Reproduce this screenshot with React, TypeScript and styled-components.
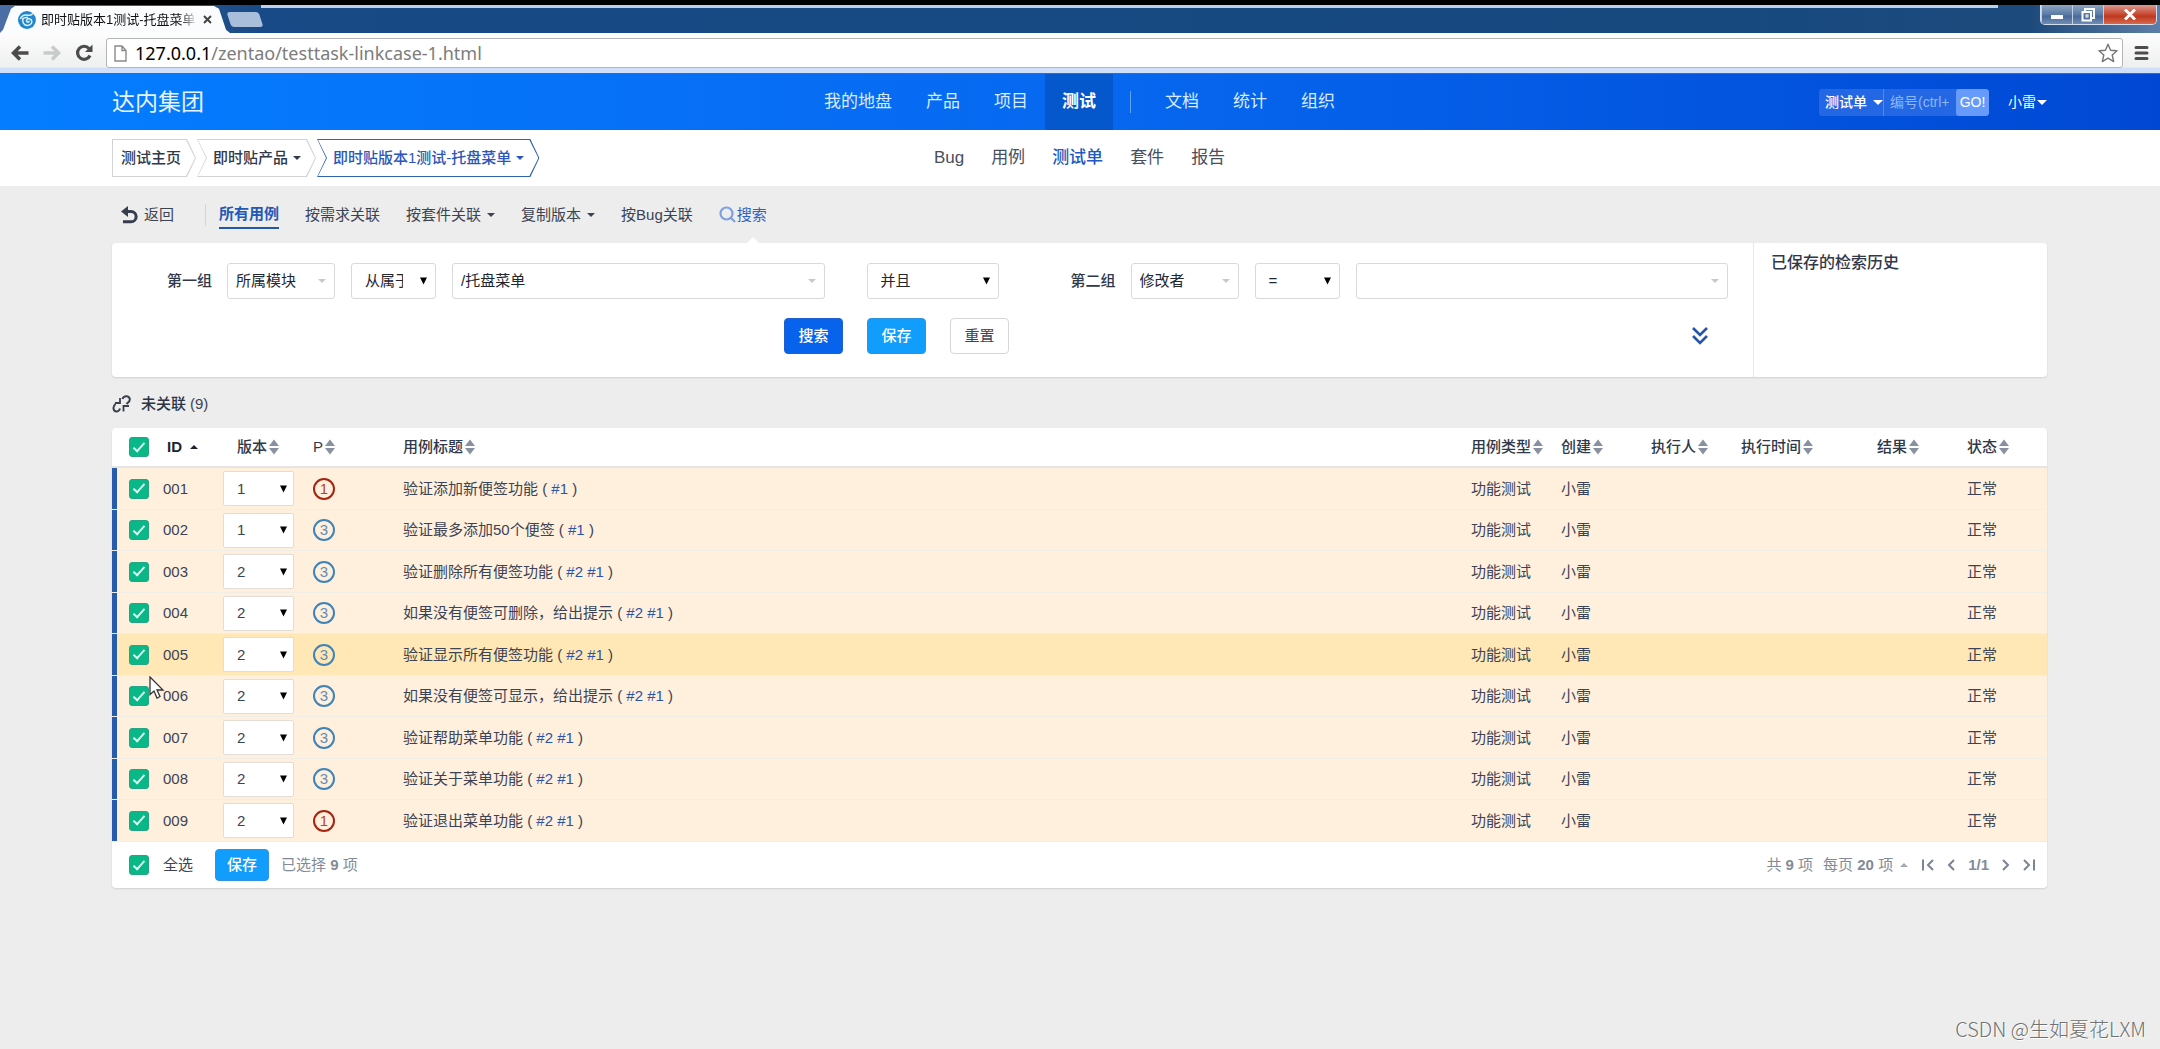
import React from "react";
import styled, { createGlobalStyle, css } from "styled-components";

const GlobalStyle = createGlobalStyle`
  *, *::before, *::after { box-sizing: border-box; }
  body {
    margin: 0;
    background: #ecedec;
    color: #3c4353;
    font: 15px/20px "Liberation Sans", "Noto Sans CJK SC", sans-serif;
  }
  button, input, select { font: inherit; color: inherit; margin: 0; }
  button { cursor: pointer; }
  a { color: inherit; text-decoration: none; }
`;

const Page = styled.div`
  min-height: 100vh;
  display: flex;
  flex-direction: column;
`;

/* ---------- browser frame ---------- */

const TitleBar = styled.div`
  display: flex;
  align-items: flex-end;
  height: 33px;
  border-top: 5px solid #000;
  background: linear-gradient(90deg, #4c6ea6 0, #174a86 260px, #17497f 80%, #1d4a7c 94%, #5d7ea6 100%);
`;

const BrowserTab = styled.div`
  display: flex;
  align-items: center;
  width: 230px;
  height: 27px;
  padding: 0 18px;
  color: #111;
  background: #fbfcfe;
  clip-path: polygon(0 100%, 3px 88%, 11px 10%, 15px 0, 214px 0, 219px 10%, 226px 88%, 230px 100%);
`;

const TabTitle = styled.span`
  width: 157px;
  margin: 0 6px 0 5px;
  font-size: 13px;
  white-space: nowrap;
  mask-image: linear-gradient(90deg, #000 90%, transparent);
`;

const NewTab = styled.button`
  width: 32px;
  height: 15px;
  margin: 0 0 6px -1px;
  padding: 0;
  border: 0;
  border-radius: 3px;
  background: #a9bedb;
  transform: skewX(18deg);
`;

const TopGlow = styled.div`
  flex: 1;
  align-self: flex-start;
  height: 3px;
  margin-right: 42px;
  background: #bcd0ea;
`;

const WindowButtons = styled.div`
  display: flex;
  align-self: flex-start;
  height: 20px;
  margin-right: 3px;
  border: 1px solid #d3dfee;
  border-top: 0;
  border-radius: 0 0 5px 5px;
  overflow: hidden;
`;

const WindowButton = styled.button<{ $close?: boolean }>`
  display: grid;
  place-items: center;
  width: ${(p) => (p.$close ? 53 : 31)}px;
  padding: 0;
  border: 0;
  border-left: 1px solid #c3d0e2;
  background: ${(p) =>
    p.$close
      ? "linear-gradient(#d99a90, #c9462f 50%, #bd3a22 60%, #d9694a)"
      : "linear-gradient(#8fa6c4, #587aa4 50%, #48699a 60%, #6f8db4)"};
`;

const AddressBar = styled.div`
  display: flex;
  align-items: center;
  height: 41px;
  padding: 0 9px 0 10px;
  background: linear-gradient(#fdfdfe, #eeefef 85%, #cfe0f8 88%);
  border-bottom: 1px solid #4a6796;
`;

const ToolButton = styled.button`
  display: grid;
  place-items: center;
  padding: 0;
  border: 0;
  background: none;
  width: 20px;
  margin-right: 12px;
`;

const MenuButton = styled(ToolButton)`
  margin: 0 0 0 8px;
`;

const UrlBox = styled.div`
  flex: 1;
  display: flex;
  align-items: center;
  height: 30px;
  padding: 0 4px 0 7px;
  border: 1px solid #b3b5b7;
  border-radius: 3px;
  background: #fff;
`;

const UrlText = styled.div`
  flex: 1;
  margin-left: 8px;
  color: #7c7c7c;
  font: 18px/24px "Noto Sans", "Open Sans", sans-serif;
  b { color: #000; font-weight: 400; }
`;

/* ---------- application header ---------- */

const Header = styled.header`
  display: grid;
  grid-template-columns: 1fr auto 1fr;
  align-items: center;
  height: 56px;
  padding: 0 113px 0 112px;
  color: #fff;
  background: linear-gradient(90deg, #047dff, #0768f0 50%, #0048d4);
`;

const Company = styled.a`
  color: #e4f4ff;
  font-size: 23px;
  line-height: 32px;
`;

const MainNav = styled.nav`
  display: flex;
  align-items: center;
`;

const MainLink = styled.a<{ $active?: boolean }>`
  padding: 0 17px;
  font-size: 17px;
  line-height: 56px;
  color: ${(p) => (p.$active ? "#fff" : "#d6ecff")};
  font-weight: ${(p) => (p.$active ? 700 : 400)};
  background: ${(p) => (p.$active ? "#0557cc" : "none")};
`;

const NavDivider = styled.span`
  width: 1px;
  height: 22px;
  margin: 0 17px;
  background: #5da4f8;
`;

const HeaderTools = styled.div`
  display: flex;
  justify-content: flex-end;
  align-items: center;
  font-size: 14px;
`;

const QuickSearch = styled.form`
  display: flex;
  height: 27px;
  margin-right: 19px;
  border-radius: 3px;
  overflow: hidden;
  background: #2467e4;
`;

const QuickType = styled.button`
  display: flex;
  align-items: center;
  gap: 6px;
  width: 65px;
  padding: 0 0 0 6px;
  border: 0;
  border-right: 1px solid #5588ec;
  background: none;
  font-weight: 500;
  white-space: nowrap;
`;

const QuickInput = styled.input`
  width: 72px;
  padding: 0 7px 0 6px;
  border: 0;
  background: none;
  &::placeholder { color: #8fb5f7; }
`;

const GoButton = styled.button`
  width: 33px;
  padding: 0;
  border: 0;
  border-radius: 3px;
  background: #669bfb;
`;

const UserButton = styled.button`
  display: flex;
  align-items: center;
  gap: 1px;
  padding: 0;
  border: 0;
  background: none;
`;

const Caret = styled.i<{ $color?: string; $up?: boolean; $small?: boolean }>`
  display: inline-block;
  border: ${(p) => (p.$small ? 4 : 5)}px solid transparent;
  ${(p) => (p.$up ? "border-top-width: 0; border-bottom-color" : "border-bottom-width: 0; border-top-color")}:
    ${(p) => p.$color ?? "currentColor"};
`;

/* ---------- breadcrumb and sub menu ---------- */

const SubHeader = styled.div`
  display: grid;
  grid-template-columns: 1fr auto 1fr;
  align-items: center;
  height: 56px;
  padding: 0 113px 0 112px;
  background: #fefffe;
`;

const Crumbs = styled.nav`
  display: flex;
  gap: 1px;
`;

const crumbFirst = "polygon(0 0, calc(100% - 9px) 0, 100% 50%, calc(100% - 9px) 100%, 0 100%)";
const crumbNext = "polygon(0 0, calc(100% - 9px) 0, 100% 50%, calc(100% - 9px) 100%, 0 100%, 9px 50%)";

const Crumb = styled.a<{ $first?: boolean; $active?: boolean }>`
  position: relative;
  isolation: isolate;
  display: flex;
  align-items: center;
  gap: 5px;
  height: 38px;
  padding: 0 15px 0 ${(p) => (p.$first ? 9 : 16)}px;
  white-space: nowrap;
  font-weight: 500;
  color: ${(p) => (p.$active ? "#2a57b8" : "#30384a")};
  background: ${(p) => (p.$active ? "#3262b2" : "#d0d3d8")};
  clip-path: ${(p) => (p.$first ? crumbFirst : crumbNext)};
  &::before {
    content: "";
    position: absolute;
    inset: 1px;
    z-index: -1;
    background: #fff;
    clip-path: ${(p) => (p.$first ? crumbFirst : crumbNext)};
  }
`;

const SubNav = styled.nav`
  display: flex;
  gap: 27px;
  font-size: 17px;
  line-height: 24px;
`;

const SubLink = styled.a<{ $active?: boolean }>`
  color: ${(p) => (p.$active ? "#2458c0" : "#484f5e")};
  font-weight: ${(p) => (p.$active ? 500 : 400)};
`;

/* ---------- filter bar ---------- */

const Main = styled.main`
  flex: 1;
  display: flex;
  flex-direction: column;
  padding: 0 113px 0 112px;
`;

const FilterBar = styled.div`
  display: flex;
  align-items: center;
  gap: 26px;
  height: 57px;
  padding-left: 9px;
`;

const BackLink = styled.a`
  display: flex;
  align-items: center;
  gap: 6px;
  padding-right: 31px;
  margin-right: -13px;
  line-height: 22px;
  border-right: 1px solid #d3d5d6;
`;

const FilterLink = styled.a<{ $active?: boolean; $search?: boolean }>`
  position: relative;
  display: flex;
  align-items: center;
  gap: ${(p) => (p.$search ? 1 : 6)}px;
  line-height: 28px;
  ${(p) =>
    p.$active &&
    css`
      color: #2358b8;
      font-weight: 700;
      line-height: 26px;
      border-bottom: 2px solid #2358a8;
    `}
  ${(p) =>
    p.$search &&
    css`
      color: #2f62c6;
      &::after {
        content: "";
        position: absolute;
        left: 27px;
        top: 36px;
        border: 7px solid transparent;
        border-top-width: 0;
        border-bottom-color: #fff;
      }
    `}
`;

/* ---------- search panel ---------- */

const SearchPanel = styled.section`
  display: flex;
  min-height: 134px;
  border-radius: 4px;
  background: #fefffe;
  box-shadow: 0 1px 2px rgba(0, 0, 0, 0.12);
`;

const SearchForm = styled.form`
  flex: 1;
  padding: 20px 25px 23px 55px;
`;

const ConditionRow = styled.div`
  display: flex;
`;

const ConditionGroup = styled.div`
  flex: 1;
  display: flex;
  align-items: center;
  gap: 16px;
`;

const GroupLabel = styled.label`
  width: 44px;
  font-weight: 500;
  white-space: nowrap;
  color: #30384a;
`;

const Picker = styled.span<{ $width?: number; $join?: boolean }>`
  display: grid;
  align-items: center;
  justify-items: end;
  ${(p) => (p.$width ? `width: ${p.$width}px;` : "flex: 1;")}
  ${(p) => p.$join && "margin: 0 72px 0 42px;"}
  > * { grid-area: 1 / 1; }
  > i, > svg { pointer-events: none; margin-right: 9px; }
`;

const SelectBox = styled.select<{ $native?: boolean }>`
  appearance: none;
  width: 100%;
  height: 36px;
  padding: 0 32px 0 ${(p) => (p.$native ? 13 : 8)}px;
  border: 1px solid #d7dadd;
  border-radius: 3px;
  background: #fff;
  color: #22262e;
`;

const ActionRow = styled.div`
  display: flex;
  align-items: center;
  margin-top: 19px;
`;

const Actions = styled.div`
  flex: 1;
  display: flex;
  justify-content: center;
  gap: 24px;
`;

const Button = styled.button<{ $tone: "primary" | "info" | "plain"; $compact?: boolean }>`
  width: ${(p) => (p.$compact ? 54 : 59)}px;
  height: ${(p) => (p.$compact ? 32 : 36)}px;
  padding: 0;
  border-radius: 4px;
  font-weight: ${(p) => (p.$tone === "plain" ? 400 : 500)};
  border: 1px solid ${(p) => ({ primary: "#1f5fce", info: "#2f95e2", plain: "#d5d7dc" })[p.$tone]};
  background: ${(p) => ({ primary: "#0763ec", info: "#109dfc", plain: "#fff" })[p.$tone]};
  color: ${(p) => (p.$tone === "plain" ? "#3c4353" : "#fff")};
`;

const ExpandButton = styled.button`
  display: flex;
  justify-content: flex-end;
  width: 102px;
  padding: 0 20px 0 0;
  border: 0;
  background: none;
`;

const SavedSearches = styled.aside`
  width: 294px;
  padding: 10px 17px;
  border-left: 1px solid #e7e8e8;
`;

const SavedTitle = styled.h2`
  margin: 0;
  font-size: 16px;
  line-height: 20px;
  font-weight: 500;
  color: #30384a;
`;

/* ---------- case table ---------- */

const TableHeading = styled.div`
  display: flex;
  align-items: center;
  gap: 4px;
  height: 51px;
  padding-top: 3px;
  svg { margin-right: 6px; }
  b { color: #2c3342; font-weight: 500; }
`;

const TableCard = styled.section`
  border-radius: 4px;
  background: #fefffe;
  box-shadow: 0 1px 2px rgba(0, 0, 0, 0.12);
`;

const CaseTable = styled.table`
  width: 100%;
  table-layout: fixed;
  border-collapse: separate;
  border-spacing: 0;
`;

const Th = styled.th<{ $width?: number; $center?: boolean }>`
  ${(p) => p.$width && `width: ${p.$width}px;`}
  height: 40px;
  padding: 0 0 0 ${(p) => (p.$center ? 0 : 10)}px;
  text-align: ${(p) => (p.$center ? "center" : "left")};
  font-weight: 500;
  color: #30384a;
  white-space: nowrap;
  border-bottom: 2px solid #e6e5e1;
`;

const HeadLabel = styled.span<{ $sorted?: boolean }>`
  display: inline-flex;
  align-items: center;
  gap: ${(p) => (p.$sorted ? 8 : 2)}px;
  ${(p) => p.$sorted && "font-weight: 700;"}
`;

const CheckLine = styled.label`
  display: flex;
  align-items: center;
  gap: 14px;
  padding-left: 17px;
`;

const HeadCheckLine = styled(CheckLine)`
  gap: 18px;
  padding-left: 7px;
  color: #1d2430;
`;

const Checkbox = styled.input`
  appearance: none;
  display: grid;
  place-items: center;
  width: 20px;
  height: 20px;
  border: 1px solid #25a585;
  border-radius: 3px;
  background: #0ab787;
  &::after {
    content: "";
    width: 6px;
    height: 12px;
    margin-top: -3px;
    border: solid #d8fff2;
    border-width: 0 2px 2px 0;
    transform: rotate(42deg);
  }
`;

const Row = styled.tr<{ $hover?: boolean }>`
  height: 42px;
  background: ${(p) => (p.$hover ? "#ffe8b6" : "#fff0de")};
  &:nth-child(even) { height: 41px; }
  > td:first-child { padding: 0; box-shadow: inset 5px 0 #265cab; }
`;

const Td = styled.td`
  padding: 0 0 0 10px;
  border-bottom: 1px solid #f0eee6;
  white-space: nowrap;
`;

const VersionPicker = styled(Picker)`
  width: 71px;
  > svg { margin-right: 7px; }
`;

const VersionSelect = styled.select`
  appearance: none;
  display: block;
  width: 100%;
  height: 35px;
  padding: 0 20px 0 13px;
  border: 1px solid #e2ddd6;
  border-radius: 2px;
  background: #fff;
`;

const Priority = styled.span<{ $high?: boolean }>`
  display: grid;
  place-items: center;
  width: 22px;
  height: 22px;
  border: 2px solid ${(p) => (p.$high ? "#a5230f" : "#3f83b8")};
  border-radius: 50%;
  color: ${(p) => (p.$high ? "#b8432c" : "#5e8cb4")};
  line-height: 18px;
`;

const BugLink = styled.a`
  color: #2c53a8;
`;

const TableFooter = styled.footer`
  display: flex;
  align-items: center;
  height: 46px;
  color: #838a99;
`;

const SelectAll = styled(CheckLine)`
  margin-right: 22px;
  color: #3c4353;
`;

const Selected = styled.span`
  flex: 1;
  margin-left: 12px;
`;

const Pager = styled.nav`
  display: flex;
  align-items: center;
  padding-right: 12px;
`;

const PageSize = styled.button`
  display: flex;
  align-items: center;
  gap: 7px;
  margin: 0 14px 0 10px;
  padding: 0;
  border: 0;
  background: none;
`;

const PageButton = styled.button`
  display: grid;
  padding: 0;
  border: 0;
  background: none;
`;

const PageSteps = styled.div`
  display: flex;
  align-items: center;
  gap: 10px;
`;

const Watermark = styled.div`
  align-self: flex-end;
  margin-top: auto;
  padding: 0 14px 6px 0;
  color: #6f7172;
  font: 300 20px/28px "Noto Sans CJK SC", sans-serif;
  text-shadow: 1px 1px 0 #fff;
`;

const Pointer = styled.svg`
  position: absolute;
  left: 149px;
  top: 676px;
  pointer-events: none;
`;

/* ---------- drawings ---------- */

const Sort = () => (
  <svg width="10" height="16" viewBox="0 0 10 16" fill="#8990a0" aria-hidden="true">
    <path d="M5 0.5 L10 7 H0 Z M5 15.5 L10 9 H0 Z" />
  </svg>
);

const NativeArrow = () => (
  <svg width="7" height="8" viewBox="0 0 7 8" fill="#000" aria-hidden="true">
    <path d="M0 0.5 H7 L3.5 7.5 Z" />
  </svg>
);

const Step = ({ d, label }: { d: string; label: string }) => (
  <PageButton type="button" aria-label={label}>
    <svg width="13" height="14" viewBox="0 0 13 14" fill="none" stroke="#7c8392" strokeWidth="2">
      <path d={d} />
    </svg>
  </PageButton>
);

/* ---------- data ---------- */

type Case = { id: string; version: string; pri: 1 | 3; title: string; bugs: string[]; hover?: boolean };

const cases: Case[] = [
  { id: "001", version: "1", pri: 1, title: "验证添加新便签功能", bugs: ["#1"] },
  { id: "002", version: "1", pri: 3, title: "验证最多添加50个便签", bugs: ["#1"] },
  { id: "003", version: "2", pri: 3, title: "验证删除所有便签功能", bugs: ["#2", "#1"] },
  { id: "004", version: "2", pri: 3, title: "如果没有便签可删除，给出提示", bugs: ["#2", "#1"] },
  { id: "005", version: "2", pri: 3, title: "验证显示所有便签功能", bugs: ["#2", "#1"], hover: true },
  { id: "006", version: "2", pri: 3, title: "如果没有便签可显示，给出提示", bugs: ["#2", "#1"] },
  { id: "007", version: "2", pri: 3, title: "验证帮助菜单功能", bugs: ["#2", "#1"] },
  { id: "008", version: "2", pri: 3, title: "验证关于菜单功能", bugs: ["#2", "#1"] },
  { id: "009", version: "2", pri: 1, title: "验证退出菜单功能", bugs: ["#2", "#1"] },
];

const tailColumns: [string, number][] = [
  ["用例类型", 90],
  ["创建", 90],
  ["执行人", 90],
  ["执行时间", 136],
  ["结果", 90],
  ["状态", 90],
];

const Field = ({ id, value, width, native, join, label }: {
  id?: string; value: string; width?: number; native?: boolean; join?: boolean; label: string;
}) => (
  <Picker $width={width} $join={join}>
    <SelectBox id={id} aria-label={id ? undefined : label} $native={native}>
      <option>{value}</option>
    </SelectBox>
    {native ? <NativeArrow /> : <Caret $small $color="#c6c9ce" />}
  </Picker>
);

const BrowserFrame = () => (
  <>
    <TitleBar>
      <BrowserTab>
        <svg width="18" height="18" viewBox="0 0 18 18" aria-hidden="true">
          <circle cx="9" cy="9" r="9" fill="#2187c8" />
          <path d="M2.500 7.500 C4 4.500 7 3.500 10 4.200 C12 4.600 13.500 4 14.500 3 M5 7.500 C4 11 6 14.500 9.500 14.500 C13 14.500 14.800 11.500 13.500 9 C12.300 7 8.800 7.200 8.500 9.500 C8.300 11.200 10.500 11.800 11.200 10.300 M4.500 8 C6 6.500 8 6.200 9.500 6.500" fill="none" stroke="#d9f2ff" strokeWidth="1.500" strokeLinecap="round" />
        </svg>
        <TabTitle>即时贴版本1测试-托盘菜单</TabTitle>
        <svg width="9" height="9" viewBox="0 0 9 9" stroke="#444" strokeWidth="2" aria-hidden="true">
          <path d="M1 1 L8 8 M8 1 L1 8" />
        </svg>
      </BrowserTab>
      <NewTab type="button" aria-label="New tab" />
      <TopGlow />
      <WindowButtons>
        <WindowButton type="button" aria-label="Minimize">
          <svg width="12" height="12"><rect x="0" y="6" width="12" height="4" fill="#fff" /></svg>
        </WindowButton>
        <WindowButton type="button" aria-label="Restore">
          <svg width="14" height="14" viewBox="0 0 14 14" fill="none" stroke="#fff" strokeWidth="2">
            <path d="M4 3 V1 H13 V10 H11" /><rect x="1.500" y="4" width="8.500" height="8.500" /><rect x="5" y="7" width="2" height="2" strokeWidth="1" />
          </svg>
        </WindowButton>
        <WindowButton type="button" $close aria-label="Close">
          <svg width="12" height="11" viewBox="0 0 12 11" stroke="#fff" strokeWidth="3"><path d="M1 0.500 L11 10.500 M11 0.500 L1 10.500" /></svg>
        </WindowButton>
      </WindowButtons>
    </TitleBar>
    <AddressBar>
      <ToolButton type="button" aria-label="Back">
        <svg width="18" height="16" viewBox="0 0 18 16" fill="none" stroke="#4b4b4b" strokeWidth="3.500"><path d="M17.500 8 H3 M9 1.500 L2.500 8 L9 14.500" /></svg>
      </ToolButton>
      <ToolButton type="button" aria-label="Forward">
        <svg width="18" height="16" viewBox="0 0 18 16" fill="none" stroke="#c9cbcb" strokeWidth="3.500"><path d="M0.500 8 H15 M9 1.500 L15.500 8 L9 14.500" /></svg>
      </ToolButton>
      <ToolButton type="button" aria-label="Reload">
        <svg width="18" height="18" viewBox="0 0 18 18"><path d="M14 4.500 A6.500 6.500 0 1 0 15 11.500" fill="none" stroke="#4b4b4b" strokeWidth="3.200" /><path d="M17.500 0.500 V8 H10 Z" fill="#4b4b4b" /></svg>
      </ToolButton>
      <UrlBox>
        <svg width="13" height="17" viewBox="0 0 13 17" fill="#fff" stroke="#8a8a8a" strokeWidth="1.400"><path d="M1 1 H8 L12 5.500 V16 H1 Z M8 1 V5.500 H12" /></svg>
        <UrlText><b>127.0.0.1</b>/zentao/testtask-linkcase-1.html</UrlText>
        <svg width="20" height="20" viewBox="0 0 20 20" fill="#fff" stroke="#757575" strokeWidth="1.400" strokeLinejoin="round"><path d="M10 1.200 L12.600 7.200 L19 7.700 L14.200 12 L15.700 18.600 L10 15.100 L4.300 18.600 L5.800 12 L1 7.700 L7.400 7.200 Z" /></svg>
      </UrlBox>
      <MenuButton type="button" aria-label="Menu">
        <svg width="15" height="16" viewBox="0 0 15 16" stroke="#4d4d4d" strokeWidth="3" strokeLinecap="round"><path d="M2 2.500 H13 M2 8 H13 M2 13.500 H13" /></svg>
      </MenuButton>
    </AddressBar>
  </>
);

export default function App() {
  return (
    <Page>
      <GlobalStyle />
      <BrowserFrame />
      <Header>
        <Company href="#">达内集团</Company>
        <MainNav>
          <MainLink href="#">我的地盘</MainLink>
          <MainLink href="#">产品</MainLink>
          <MainLink href="#">项目</MainLink>
          <MainLink href="#" $active>测试</MainLink>
          <NavDivider />
          <MainLink href="#">文档</MainLink>
          <MainLink href="#">统计</MainLink>
          <MainLink href="#">组织</MainLink>
        </MainNav>
        <HeaderTools>
          <QuickSearch>
            <QuickType type="button">测试单<Caret /></QuickType>
            <QuickInput placeholder="编号(ctrl+g)" aria-label="编号" />
            <GoButton type="button">GO!</GoButton>
          </QuickSearch>
          <UserButton type="button">小雷<Caret /></UserButton>
        </HeaderTools>
      </Header>
      <SubHeader>
        <Crumbs>
          <Crumb href="#" $first>测试主页</Crumb>
          <Crumb href="#">即时贴产品<Caret $small /></Crumb>
          <Crumb href="#" $active>即时贴版本1测试-托盘菜单<Caret $small /></Crumb>
        </Crumbs>
        <SubNav>
          <SubLink href="#">Bug</SubLink>
          <SubLink href="#">用例</SubLink>
          <SubLink href="#" $active>测试单</SubLink>
          <SubLink href="#">套件</SubLink>
          <SubLink href="#">报告</SubLink>
        </SubNav>
      </SubHeader>
      <Main>
        <FilterBar>
          <BackLink href="#">
            <svg width="17" height="18" viewBox="0 0 17 18" fill="none" stroke="#363d4c" strokeWidth="3">
              <path d="M4 5.500 H10 A5 5 0 0 1 10 15.800 H2" /><path d="M7 0 V11 L0 5.500 Z" fill="#363d4c" stroke="none" />
            </svg>
            返回
          </BackLink>
          <FilterLink href="#" $active>所有用例</FilterLink>
          <FilterLink href="#">按需求关联</FilterLink>
          <FilterLink href="#">按套件关联<Caret $small /></FilterLink>
          <FilterLink href="#">复制版本<Caret $small /></FilterLink>
          <FilterLink href="#">按Bug关联</FilterLink>
          <FilterLink href="#" $search>
            <svg width="17" height="17" viewBox="0 0 17 17" fill="none" stroke="#7f9fdc" strokeWidth="2.200"><circle cx="7.500" cy="7.500" r="6" /><path d="M11.800 11.800 L16 16" /></svg>
            搜索
          </FilterLink>
        </FilterBar>
        <SearchPanel>
          <SearchForm>
            <ConditionRow>
              <ConditionGroup>
                <GroupLabel htmlFor="field1">第一组</GroupLabel>
                <Field id="field1" label="字段" value="所属模块" width={108} />
                <Field label="条件" value="从属于" width={85} native />
                <Field label="值" value="/托盘菜单" />
              </ConditionGroup>
              <Field label="关系" value="并且" width={132} native join />
              <ConditionGroup>
                <GroupLabel htmlFor="field2">第二组</GroupLabel>
                <Field id="field2" label="字段" value="修改者" width={108} />
                <Field label="条件" value="=" width={85} native />
                <Field label="值" value="" />
              </ConditionGroup>
            </ConditionRow>
            <ActionRow>
              <Actions>
                <Button type="button" $tone="primary">搜索</Button>
                <Button type="button" $tone="info">保存</Button>
                <Button type="button" $tone="plain">重置</Button>
              </Actions>
              <ExpandButton type="button" aria-label="展开">
                <svg width="16" height="18" viewBox="0 0 16 18" fill="none" stroke="#2655a6" strokeWidth="2.600"><path d="M1 1 L8 8 L15 1 M1 9 L8 16 L15 9" /></svg>
              </ExpandButton>
            </ActionRow>
          </SearchForm>
          <SavedSearches>
            <SavedTitle>已保存的检索历史</SavedTitle>
          </SavedSearches>
        </SearchPanel>
        <TableHeading>
          <svg width="19" height="18" viewBox="0 0 19 18" fill="none" stroke="#3a404e" strokeWidth="2">
            <path d="M8 3 V8 H3" strokeWidth="1.800" />
            <path d="M3.500 9 C0 12 1.500 17 5 16.500 C6.500 16.300 7.500 15 8 13.500" />
            <path d="M10.500 4 C11.500 0.500 17 0 17.800 4 C18.200 6.500 16 7.500 14.500 9" />
            <path d="M11.500 16.500 V11 H17" strokeWidth="1.800" />
          </svg>
          <b>未关联</b>
          <span>(9)</span>
        </TableHeading>
        <TableCard>
          <CaseTable>
            <thead>
              <tr>
                <Th $width={101}>
                  <HeadCheckLine>
                    <Checkbox type="checkbox" defaultChecked />
                    <HeadLabel $sorted>ID<Caret $small $up /></HeadLabel>
                  </HeadCheckLine>
                </Th>
                <Th $width={90} $center><HeadLabel>版本<Sort /></HeadLabel></Th>
                <Th $width={90}><HeadLabel>P<Sort /></HeadLabel></Th>
                <Th><HeadLabel>用例标题<Sort /></HeadLabel></Th>
                {tailColumns.map(([name, width]) => (
                  <Th key={name} $width={width}><HeadLabel>{name}<Sort /></HeadLabel></Th>
                ))}
              </tr>
            </thead>
            <tbody>
              {cases.map((c) => (
                <Row key={c.id} $hover={c.hover}>
                  <Td><CheckLine><Checkbox type="checkbox" defaultChecked />{c.id}</CheckLine></Td>
                  <Td>
                    <VersionPicker>
                      <VersionSelect defaultValue={c.version} aria-label={`版本 ${c.id}`}>
                        <option>{c.version}</option>
                      </VersionSelect>
                      <NativeArrow />
                    </VersionPicker>
                  </Td>
                  <Td><Priority $high={c.pri === 1}>{c.pri}</Priority></Td>
                  <Td>
                    {c.title} ( {c.bugs.map((b) => <React.Fragment key={b}><BugLink href="#">{b}</BugLink> </React.Fragment>)})
                  </Td>
                  <Td>功能测试</Td>
                  <Td>小雷</Td>
                  <Td />
                  <Td />
                  <Td />
                  <Td>正常</Td>
                </Row>
              ))}
            </tbody>
          </CaseTable>
          <TableFooter>
            <SelectAll><Checkbox type="checkbox" defaultChecked />全选</SelectAll>
            <Button type="button" $tone="info" $compact>保存</Button>
            <Selected>已选择 <b>9</b> 项</Selected>
            <Pager>
              <span>共 <b>9</b> 项</span>
              <PageSize type="button"><span>每页 <b>20</b> 项</span><Caret $small $up $color="#a3a8b3" /></PageSize>
              <PageSteps>
                <Step label="首页" d="M1 1.500 V12.500 M11 2 L6 7 L11 12" />
                <Step label="上一页" d="M9 2 L4 7 L9 12" />
                <b>1/1</b>
                <Step label="下一页" d="M4 2 L9 7 L4 12" />
                <Step label="末页" d="M12 1.500 V12.500 M2 2 L7 7 L2 12" />
              </PageSteps>
            </Pager>
          </TableFooter>
        </TableCard>
      </Main>
      <Watermark>CSDN @生如夏花LXM</Watermark>
      <Pointer width="16" height="24" viewBox="0 0 16 24" aria-hidden="true">
        <path d="M1 1 V18.500 L5 15 L8 22 L11 20.500 L8 14 H14 Z" fill="#fff" stroke="#333" strokeWidth="1.300" />
      </Pointer>
    </Page>
  );
}
